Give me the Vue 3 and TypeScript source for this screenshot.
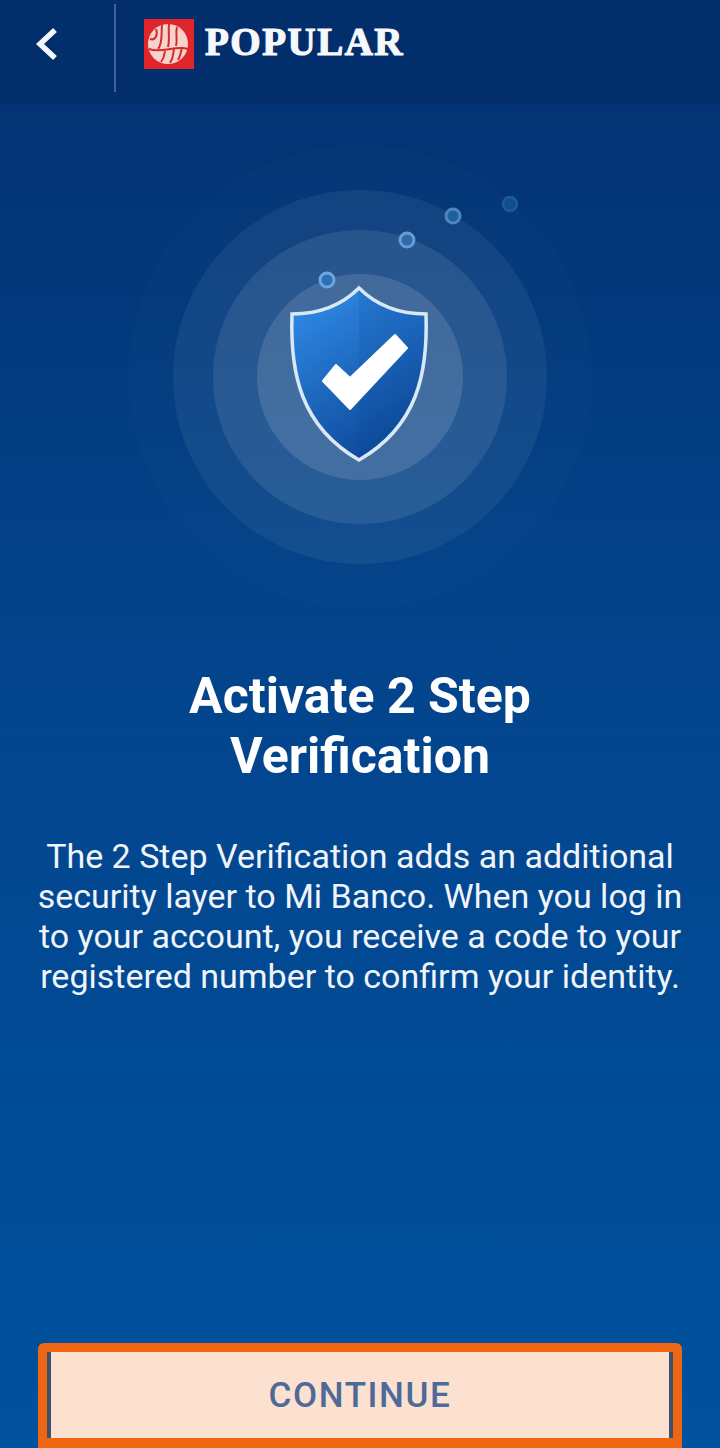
<template>
  <div class="screen">
    <header class="topbar">
      <button class="back" aria-label="Back">
        <svg width="26" height="36" viewBox="0 0 26 36" fill="none">
          <path d="M21 4L6 18L21 32" stroke="#f4f7fb" stroke-width="5.5" />
        </svg>
      </button>
      <span class="divider"></span>
      <svg class="mark" width="50" height="50" viewBox="0 0 50 50">
        <rect width="50" height="50" fill="#e0262b" />
        <circle cx="24" cy="25" r="20" fill="#f6d3cd" />
        <g stroke="#d8292d" stroke-width="2" fill="none">
          <path d="M6 20C12 22 14 15 12 10" />
          <path d="M14 30C19 24 17 15 18 6" />
          <path d="M24 28C26 20 24 14 25 5" />
          <path d="M32 27C34 20 31 15 33 8" />
          <path d="M5 30C17 35 31 26 44 30" />
          <path d="M17 43C21 38 20 35 21 32" />
          <path d="M26 44C30 38 29 34 30 30" />
          <path d="M34 41C37 36 37 33 38 28" />
        </g>
      </svg>
      <span class="brand">POPULAR</span>
    </header>

    <section class="hero">
      <svg width="720" height="502" viewBox="0 104 720 502">
        <defs>
          <linearGradient id="shieldFill" x1="0.2" y1="0" x2="0.7" y2="1">
            <stop offset="0" stop-color="#2f8ae6" />
            <stop offset="1" stop-color="#0b4596" />
          </linearGradient>
        </defs>
        <circle cx="360" cy="377" r="232" fill="#fff" opacity="0.012" />
        <circle cx="360" cy="377" r="187" fill="#fff" opacity="0.06" />
        <circle cx="360" cy="377" r="147" fill="#fff" opacity="0.09" />
        <circle cx="360" cy="377" r="103" fill="#fff" opacity="0.12" />

        <circle cx="327" cy="280" r="7" fill="#2a6fb8" stroke="#6ea6df" stroke-width="3" />
        <circle cx="407" cy="240" r="7" fill="#2a6aad" stroke="#6a9cd0" stroke-width="3" />
        <circle cx="453" cy="216" r="7" fill="#20609f" stroke="#4f86bd" stroke-width="3" />
        <circle cx="510" cy="204" r="7" fill="#0f4d8f" stroke="#1e5a98" stroke-width="2.5" />

        <path
          d="M359 288C341 306 318 314 292 314C290 372 300 426 359 460C418 426 428 372 426 314C400 314 377 306 359 288Z"
          fill="url(#shieldFill)"
          stroke="#d9e8f5"
          stroke-width="3.5"
        />
        <path d="M359 290V458C414 426 425 372 424 316C400 316 377 308 359 290Z" fill="#0b3f8e" opacity="0.12" />
        <path
          d="M336 365L350 378L395 335L407 348L350 409L323 381Z"
          fill="#fff"
          stroke="#fff"
          stroke-width="2"
          stroke-linejoin="round"
        />
      </svg>
    </section>

    <main class="copy">
      <h1>Activate 2 Step<br />Verification</h1>
      <p>
        The 2 Step Verification adds an additional<br />
        security layer to Mi Banco. When you log in<br />
        to your account, you receive a code to your<br />
        registered number to confirm your identity.
      </p>
    </main>

    <footer class="actions">
      <button class="continue">CONTINUE</button>
    </footer>
  </div>
</template>

<script setup lang="ts">
</script>

<style>
html,
body {
  margin: 0;
}
</style>

<style scoped>
.screen {
  width: 720px;
  height: 1448px;
  overflow: hidden;
  display: flex;
  flex-direction: column;
  background: linear-gradient(180deg, #03306f 0%, #03448c 45%, #00519e 100%);
  font-family: Roboto, "Liberation Sans", sans-serif;
  color: #fff;
}
.topbar {
  height: 104px;
  flex-shrink: 0;
  display: flex;
  align-items: center;
  background: #022e6c;
  box-sizing: border-box;
  padding-left: 34px;
}
.back {
  all: unset;
  display: flex;
  width: 26px;
  height: 36px;
  margin-bottom: 17px;
}
.divider {
  width: 2px;
  height: 88px;
  margin: 0 28px 8px 54px;
  background: #3c6499;
}
.mark {
  margin-bottom: 17px;
}
.brand {
  margin: 0 0 21px 11px;
  font-family: "Liberation Serif", serif;
  font-weight: 700;
  font-size: 39px;
  line-height: 40px;
  letter-spacing: 1.5px;
  color: #f6f8fb;
  -webkit-text-stroke: 1.2px #f6f8fb;
}
.hero {
  height: 502px;
  flex-shrink: 0;
}
.hero svg {
  display: block;
}
.copy {
  flex: 1;
  text-align: center;
  padding-top: 60px;
}
h1 {
  margin: 0;
  font-size: 50px;
  line-height: 60px;
  font-weight: 700;
}
p {
  margin: 50px 0 0;
  font-size: 34px;
  line-height: 40px;
  color: #f0f4f9;
}
.actions {
  height: 105px;
  flex-shrink: 0;
  padding: 0 38px;
}
.continue {
  all: unset;
  box-sizing: border-box;
  display: flex;
  align-items: center;
  justify-content: center;
  width: 644px;
  height: 112px;
  background: #fde1d0;
  border: solid #ee6512;
  border-width: 9px 9px 17px;
  border-radius: 6px;
  box-shadow: inset 4px 0 0 #3f4f6f, inset -4px 0 0 #3f4f6f;
  color: #4e6a98;
  font-size: 35px;
  font-weight: 500;
  letter-spacing: 1.6px;
}
</style>
